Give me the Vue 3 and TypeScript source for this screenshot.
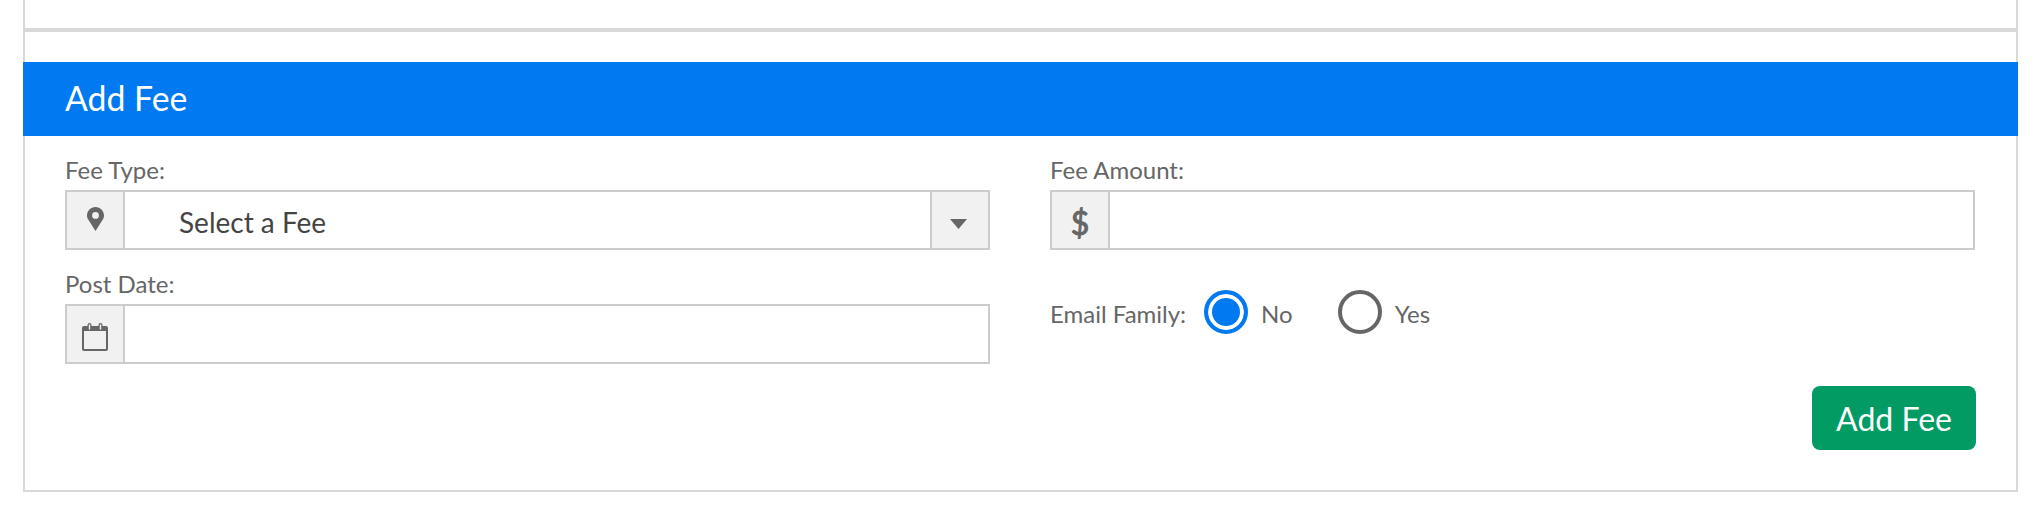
<script setup lang="ts">
import { ref } from 'vue'

const emailFamily = ref<'No' | 'Yes'>('No')
const options: Array<'No' | 'Yes'> = ['No', 'Yes']
</script>

<template>
  <div class="page">
    <div class="top-panel"></div>
    <section class="panel">
      <h2 class="panel-title">Add Fee</h2>
      <div class="form-grid">
        <div class="field">
          <label class="label">Fee Type:</label>
          <div class="group">
            <span class="addon">
              <svg class="pin" width="17" height="24" viewBox="0 0 17 24">
                <path fill="#666" fill-rule="evenodd" d="M8.500 0C3.800 0 0 3.800 0 8.400c0 1.600.5 2.900 1.200 4.200L8.500 24l7.300-11.400c.7-1.300 1.200-2.600 1.200-4.200C17 3.800 13.200 0 8.500 0zm0 5a3.400 3.400 0 1 1 0 6.800 3.400 3.400 0 0 1 0-6.800z" />
              </svg>
            </span>
            <div class="value select-value">Select a Fee</div>
            <span class="addon addon-end">
              <svg class="caret" width="17" height="10" viewBox="0 0 17 10">
                <path fill="#666" d="M0 0h17L8.500 10z" />
              </svg>
            </span>
          </div>
        </div>
        <div class="field">
          <label class="label">Fee Amount:</label>
          <div class="group">
            <span class="addon dollar">$</span>
            <input class="value" type="text" />
          </div>
        </div>
        <div class="field">
          <label class="label">Post Date:</label>
          <div class="group">
            <span class="addon">
              <svg class="calendar" width="26" height="28" viewBox="0 0 26 28">
                <path fill="#666" d="M2 3h3.500V2a2 2 0 0 1 4 0v1h7V2a2 2 0 0 1 4 0v1H24a2 2 0 0 1 2 2v21a2 2 0 0 1-2 2H2a2 2 0 0 1-2-2V5a2 2 0 0 1 2-2z" />
                <path fill="#f1f1f1" d="M2 8h22v18H2zM6.800 2a.7.7 0 0 1 1.400 0v4a.7.7 0 0 1-1.400 0zM17.800 2a.7.7 0 0 1 1.400 0v4a.7.7 0 0 1-1.400 0z" />
              </svg>
            </span>
            <input class="value" type="text" />
          </div>
        </div>
        <div class="radio-row">
          <span class="label radio-label">Email Family:</span>
          <label v-for="option in options" :key="option" class="radio" @click="emailFamily = option">
            <span class="circle" :class="{ checked: emailFamily === option }"></span>
            <span class="radio-text">{{ option }}</span>
          </label>
        </div>
      </div>
      <div class="actions">
        <button class="submit" type="button">Add Fee</button>
      </div>
    </section>
  </div>
</template>

<style scoped>
.page {
  box-sizing: border-box;
  width: 2039px;
  height: 516px;
  padding: 0 21px 0 23px;
  background: #fff;
  font-family: Lato, "Open Sans", sans-serif;
}
.top-panel {
  box-sizing: border-box;
  height: 30px;
  border: 2px solid #d8d8d8;
  border-top: 0;
}
.panel {
  box-sizing: border-box;
  height: 462px;
  padding-top: 30px;
  border: 2px solid #d8d8d8;
}
.panel-title {
  height: 74px;
  margin: 0 -2px;
  padding-left: 42px;
  background: #0179f1;
  color: #fff;
  font-size: 33.8px;
  font-weight: 400;
  line-height: 72px;
}
.form-grid {
  display: grid;
  grid-template-columns: 925px 925px;
  column-gap: 60px;
  row-gap: 22px;
  padding: 22px 40px 0;
}
.field {
  display: flex;
  flex-direction: column;
}
.label {
  height: 32px;
  color: #666;
  font-size: 24px;
  line-height: 24px;
}
.group {
  box-sizing: border-box;
  display: flex;
  height: 60px;
  border: 2px solid #ccc;
}
.addon {
  box-sizing: border-box;
  flex: none;
  display: flex;
  align-items: center;
  justify-content: center;
  width: 58px;
  border-right: 2px solid #ccc;
  background: #f1f1f1;
  color: #666;
}
.addon-end {
  border-right: 0;
  border-left: 2px solid #ccc;
}
.pin {
  margin-bottom: 2px;
}
.caret {
  margin-top: 8px;
  margin-right: 3px;
}
.calendar {
  margin-top: 6px;
}
.dollar {
  padding-top: 4px;
  font-size: 32px;
  font-weight: 400;
  -webkit-text-stroke: 1px #666;
}
.value {
  box-sizing: border-box;
  flex: 1;
  min-width: 0;
  border: 0;
  outline: 0;
  background: #fff;
  font: inherit;
}
.select-value {
  padding-left: 54px;
  color: #444;
  font-size: 28px;
  line-height: 60px;
}
.radio-row {
  display: flex;
  align-items: flex-start;
  padding-top: 18px;
}
.radio-label {
  height: 44px;
  margin-right: 18px;
  line-height: 47px;
}
.radio {
  display: flex;
  align-items: center;
  margin-right: 45px;
  cursor: pointer;
}
.circle {
  box-sizing: border-box;
  width: 44px;
  height: 44px;
  border: 4px solid #666;
  border-radius: 50%;
  background: #fff;
}
.circle.checked {
  border-color: #0179f1;
  background: #0179f1;
  box-shadow: inset 0 0 0 4px #fff;
}
.radio-text {
  margin-left: 13px;
  padding-top: 2px;
  color: #666;
  font-size: 24px;
}
.actions {
  display: flex;
  justify-content: flex-end;
  padding: 22px 40px 0;
}
.submit {
  width: 164px;
  height: 64px;
  border: 0;
  border-radius: 8px;
  background: #039b64;
  color: #fff;
  font-family: inherit;
  font-size: 32px;
}
</style>
